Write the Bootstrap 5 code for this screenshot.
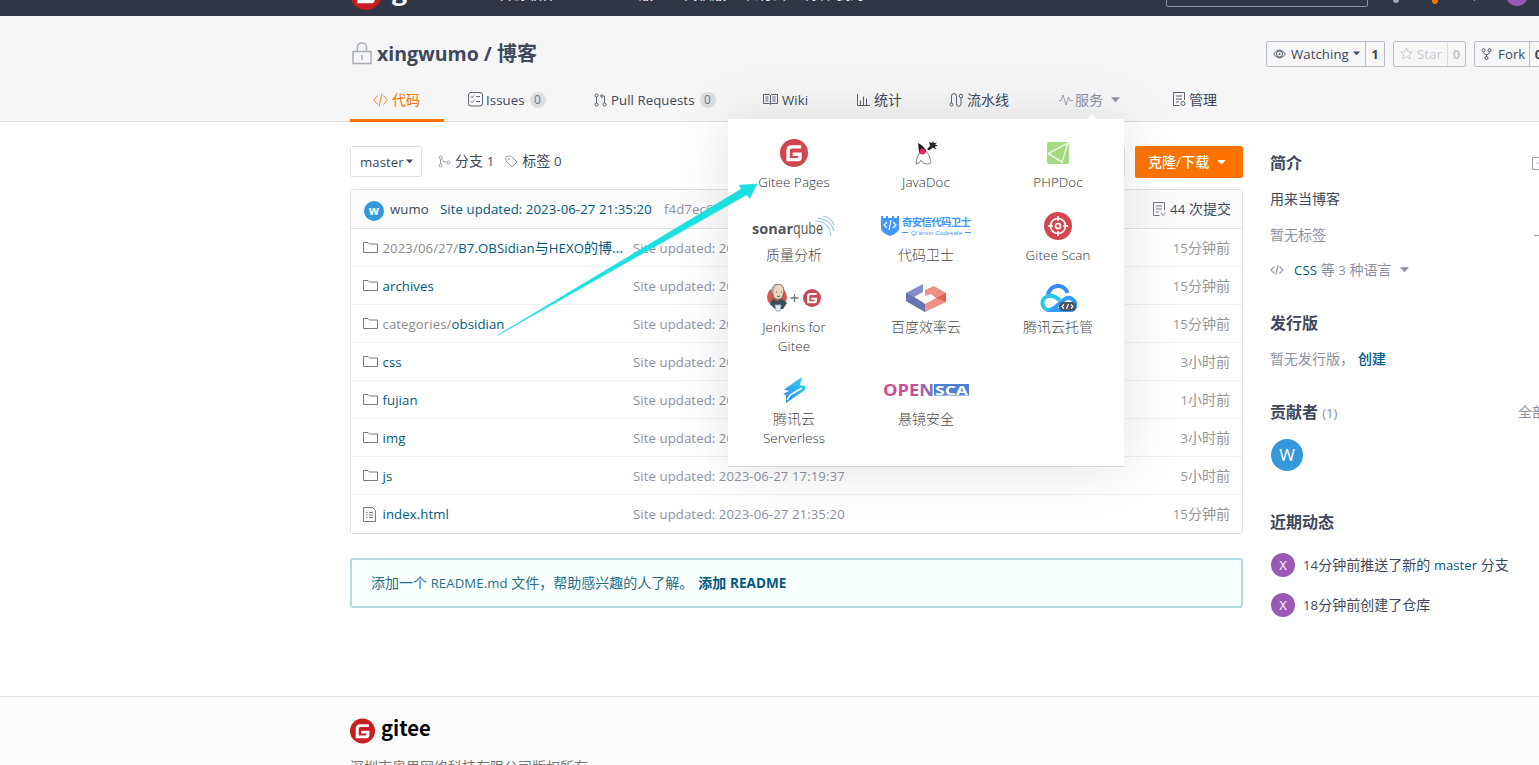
<!DOCTYPE html>
<html lang="zh-CN">
<head>
<meta charset="utf-8">
<title>xingwumo / 博客</title>
<link href="https://cdn.jsdelivr.net/npm/bootstrap@5.3.0/dist/css/bootstrap.min.css" rel="stylesheet">
<style>
body{font:14px/20px "Open Sans","Noto Sans CJK SC",sans-serif;color:#40485b;overflow:hidden;height:765px}
svg{flex:none;display:block}
.en{font-size:.943em;line-height:1;letter-spacing:.08px}
.d-flex>.en{line-height:20px}
.tabs .d-flex>.en{line-height:22px;padding-top:1px}
.wrap{width:1240px;margin-left:350px}
.ln{fill:none;stroke:currentColor;stroke-width:1;stroke-opacity:.85}
.mute{color:#8c92a4}.lnk{color:#005980}
.topbar{height:16px;background:#303643;color:#fff;overflow:hidden}
.topbar .wrap{height:42px;margin-top:-26px}
.topbar .menu span{flex:none;white-space:nowrap}
.srch{width:202px;height:34px;border:1px solid #8c92a4;border-radius:2px;margin-top:-1px}
.head{height:106px;background:#f6f6f6;border-bottom:1px solid #dcdddf}
.titlebar{height:62px;padding-top:13px}
.ttl{font-size:20px;font-weight:700;line-height:24px}
.ttl .en{font-size:19.500px;letter-spacing:0}
.sbtn{height:26px;border:1px solid #b9bcc9;border-radius:2px;margin-right:8px}
.sbtn b{border-left:1px solid #b9bcc9;height:24px;line-height:24px;text-align:center;font-size:13px}
.sbtn.off{color:#c6c6ca}.sbtn.off b{border-color:#dddde2}
.tabs{height:44px}
.tabs>div{flex:none;padding-left:23px;position:relative;white-space:nowrap;padding-top:2px}
.tabs>div:nth-child(1){width:94px;color:#fe7300;border-bottom:3px solid #fe7300}
.tabs>div:nth-child(2){width:127px;padding-left:24px}
.tabs>div:nth-child(3){width:169px}
.tabs>div:nth-child(4){width:93px}
.tabs>div:nth-child(5){width:93px}
.tabs>div:nth-child(6){width:109px}
.tabs>div:nth-child(7){width:114px;color:#8c92a4}
.tabs>div:not(:first-child){padding-bottom:3px}
.num{width:16px;height:16px;border-radius:8px;background:#dcdddf;color:#6b7691;font-size:12px;line-height:16px;text-align:center;margin-left:5px}
.drop{position:absolute;left:-307px;top:41px;width:396px;height:348px;background:#fff;box-shadow:0 0 50px rgba(60,64,75,.15);border-bottom:1px solid #d5d7da;z-index:5;padding-top:20px;display:grid;grid-template-columns:repeat(3,132px);align-content:start;row-gap:20.500px;color:#4a4a4a;white-space:normal}
.drop:before{content:"";position:absolute;left:359px;top:-5px;border:5px solid transparent;border-top:0;border-bottom-color:#fff}
.drop>div{text-align:center;line-height:19px}
.drop i{height:28px;margin-bottom:5px;display:flex;align-items:center;justify-content:center;font-style:normal}
.drop p{margin:0 auto;width:84px;font-weight:300}
.drop p .en{font-size:13.400px;color:#333}
.mainc{width:893px;padding-top:24px}
.side{width:292px;margin-left:27px;padding-top:23px;white-space:nowrap}
.side h2{font-size:16px;font-weight:600;height:36px;line-height:36px;margin:0}
.bx{border:1px solid #dce3e8;border-radius:2px;height:31px}
.dl{height:32px;width:108px;background:#fe7300;color:#fff;border-radius:2px;padding-left:13px}
.files{border:1px solid #dce3e8;border-radius:3px;margin-top:11px;height:345px}
.fr{height:38px;border-bottom:1px solid #edf1f5;padding:0 12px}
.fr.h1r{background:#fbfbfc;height:39px;border-color:#dce3e8}
.fr:last-child{border:0}
.fr .lnk{padding-left:.5px}
.fr>svg{color:#5c6375}
.ava{border-radius:50%;color:#fff;background:#3498db;text-align:center;flex:none}
.tip{margin-top:24px;height:50px;border:2px solid #b5d9e0;border-radius:3px;background:#f8ffff;color:#276f86;padding-left:19px}
.foot{margin-top:71px;border-top:1px solid #dce3e8;background:#fbfbfb;height:80px;padding-top:21px}
.brand{font:700 20.200px/24px "Noto Sans CJK SC","Noto Sans",sans-serif;color:#000}
.arrow{position:absolute;left:0;top:0;z-index:9;pointer-events:none}
</style>
<script src="https://cdn.jsdelivr.net/npm/bootstrap@5.3.0/dist/js/bootstrap.bundle.min.js"></script>
</head>
<body>
<svg width="0" height="0" class="position-absolute">
<symbol id="g" viewBox="0 0 28 28"><circle cx="14" cy="14" r="14"/><path d="M21.2 6.3v3.2h-9.300q-2.100 0-2.100 2.100v7.400h7.300q1.200 0 1.200-1.200v-.9h-5.600v-3.300h9v5.100q0 3.500-3.500 3.500H6.400V11.500q0-5.200 5.200-5.200z" fill="#fff"/></symbol>
<symbol id="dir" viewBox="0 0 15 13"><path class="ln" d="M.5 11.500V1.500h4.500l1.500 1.500h8v8.500z"/></symbol>
<symbol id="doc" viewBox="0 0 13 15"><path class="ln" d="M.5.5h9l3 3v11H.5zM3 5.500h1.500M3 8h1.500M3 10.500h1.500M6 5.500h4M6 8h4M6 10.500h4"/></symbol>
<symbol id="car" viewBox="0 0 10 6"><path d="M0 0h10L5 5.500z" fill="currentColor"/></symbol>
</svg>
<div class="topbar"><div class="wrap d-flex">
<svg width="32" height="32" style="margin-top:4px" fill="#c71d23"><use href="#g"/></svg>
<div class="menu d-flex" style="width:784px;padding-top:10px"><span class="brand text-white" style="font-size:27px;margin:-7px 0 0 9px;width:109px">gitee</span><span style="width:111px">开源软件</span><span style="width:73px">企业版</span><span style="width:60px">高校版</span><span style="width:60px">私有云</span><span style="width:32px">博客</span><span>我的</span></div>
<div class="srch"></div>
<svg width="170" height="42" fill="#a6aab8"><circle cx="28" cy="26" r="3"/><path d="M106 18h1v9h-1z"/><path d="M64 23h6v5l-2 2h-2l-2-2z" fill="#fe7300"/><circle cx="149" cy="21" r="11" fill="#9b59b6"/></svg>
</div></div>
<div class="head"><div class="wrap">
<div class="titlebar d-flex align-items-center">
<svg width="20" height="23" class="ln" style="color:#9ba1b0;stroke-width:1.500;margin-left:2px;margin-right:5px"><path d="M1 9.500h18v12H1zM5.500 9V5a4.500 4 0 0 1 9 0v4M10 13v5"/></svg>
<div class="ttl" style="width:889px"><span class="en">xingwumo / </span>博客</div>
<div class="sbtn d-flex align-items-center"><svg class="ln" width="13" height="12" style="margin:0 5px 0 6px"><path d="M.5 6Q6.500-2 12.500 6 6.500 14 .5 6z"/><circle cx="6.500" cy="6" r="3"/><circle cx="6.500" cy="6" r=".7"/></svg><span class="en" style="width:62px">Watching</span><svg width="7" height="5" style="margin-right:5px"><use href="#car"/></svg><b style="width:19px">1</b></div>
<div class="sbtn off d-flex align-items-center"><svg class="ln" width="13" height="13" style="margin:0 4px 0 6px"><path d="M6.500 1l1.700 3.700 4 .4-3 2.700.9 4-3.600-2.100-3.600 2.100.9-4-3-2.700 4-.4z"/></svg><span class="en" style="width:30px">Star</span><b style="width:18px">0</b></div>
<div class="sbtn d-flex align-items-center"><svg class="ln" width="11" height="12" style="margin:0 6px 0 6px"><circle cx="2.500" cy="2.200" r="1.500"/><circle cx="8.500" cy="2.200" r="1.500"/><circle cx="5.500" cy="10" r="1.500"/><path d="M2.500 4q0 2 3 3 3-1 3-3M5.500 6.500v2"/></svg><span class="en" style="width:31px">Fork</span><b style="width:18px">0</b></div>
</div>
<div class="tabs d-flex">
<div class="d-flex align-items-center"><svg class="ln" width="15" height="14" style="margin-right:4px"><path d="M4.500 2.500L.8 7l3.700 4.500M10.500 2.500L14.200 7l-3.700 4.500M8.800.5L6.200 13.500"/></svg>代码</div>
<div class="d-flex align-items-center"><svg class="ln" width="15" height="15" style="margin-right:3px"><rect x=".5" y=".5" width="14" height="13.500" rx="2.500"/><path d="M3 4.500l1 1 2-2M3 9.500l1 1 2-2M8 4.500h4M8 9.500h4"/></svg><span class="en">Issues</span><div class="num">0</div></div>
<div class="d-flex align-items-center"><svg class="ln" width="13" height="14" style="margin-right:4px"><circle cx="2.500" cy="2.500" r="1.500"/><circle cx="2.500" cy="11.500" r="1.500"/><circle cx="10.500" cy="11.500" r="1.500"/><path d="M2.500 4v6M10.500 10V3h-4M8.500.8L6.500 3l2 2.200"/></svg><span class="en">Pull Requests</span><div class="num">0</div></div>
<div class="d-flex align-items-center"><svg class="ln" width="15" height="13" style="margin-right:4px"><path d="M.5 1.500h6l1 1 1-1h6v9h-6l-1 1-1-1h-6zM7.500 2v9M2.500 4h3M2.500 6h3M2.500 8h3M9.500 4h3M9.500 6h3M9.500 8h3"/></svg><span class="en">Wiki</span></div>
<div class="d-flex align-items-center"><svg class="ln" width="15" height="14" style="margin-right:3px"><path d="M1.500 1v11.500H14M4.500 12V7.500M7.500 12V3.500M10.500 12V5.500"/></svg>统计</div>
<div class="d-flex align-items-center"><svg class="ln" width="15" height="14" style="margin-right:3px"><path d="M2.500 10V3a2 2 0 0 1 5 0v8a2 2 0 0 0 4.500 0V5"/><circle cx="2.500" cy="11.500" r="1.500"/><circle cx="12" cy="3" r="1.800"/></svg>流水线</div>
<div class="d-flex align-items-center"><svg class="ln" width="15" height="14" style="margin-right:2px"><path d="M1 7.500h2l2-5.500 3 10L10.500 4l1.500 3.500h3"/></svg>服务<svg width="9" height="6" style="margin-left:8px"><use href="#car"/></svg>
<div class="drop">
<div><i><svg width="28" height="28" fill="#d2474e"><use href="#g"/></svg></i><p><span class="en">Gitee Pages</span></p></div>
<div><i><svg width="26" height="28"><path d="M7 13Q3 19 3 25l3-1q2-5 4 0l4 1q4 0 4-2-1-8-6-12z" fill="#fff" stroke="#888"/><path d="M5 4q8 4 8 9-4 4-7 0z" fill="#222"/><circle cx="9.500" cy="12.500" r="2.900" fill="#e8246d"/><path d="M14 10l3-3-1-4 3 1 1-2 1 2 3-.5-2 2 3 1-3 1 1 3-3-2-4 3z" fill="#292929"/></svg></i><p><span class="en">JavaDoc</span></p></div>
<div><i><svg width="22" height="22"><rect width="22" height="22" rx="2" fill="#a5da83"/><path d="M21 1L1 11.500 15 20zM1 11.500L15 20 21 1" stroke="#e6f6db" stroke-width="1.500" fill="none"/></svg></i><p><span class="en">PHPDoc</span></p></div>
<div><i><svg width="86" height="28"><text x="1" y="22" font-family="Open Sans" font-size="14.500" font-weight="700" fill="#555" textLength="41" lengthAdjust="spacingAndGlyphs">sonar</text><text x="42" y="22" font-family="Open Sans" font-size="15.500" fill="#555" textLength="30" lengthAdjust="spacingAndGlyphs">qube</text><path d="M64 9q14 0 16 15M67 6q13 2 16 13M72 4q9 2 11 9" fill="none" stroke="#9ccbe3" stroke-width="1.200"/></svg></i><p>质量分析</p></div>
<div><i><svg width="90" height="22"><path d="M0 1h2v2h3V1h2v2h4V1h2v2h3V1h2v13q-1 4-9 7-8-3-9-7z" fill="#4097f5"/><path d="M6 7l-3 3 3 3M12 7l3 3-3 3M10 5l-2 10" stroke="#fff" fill="none" stroke-width="1.200"/><text x="21" y="11" font-family="Noto Sans CJK SC" font-size="10.500" font-weight="700" fill="#4097f5" textLength="69">奇安信代码卫士</text><text x="30" y="20" font-family="Liberation Sans" font-size="6" fill="#4097f5" textLength="51">Qi'anxin Codesafe</text><path d="M21 17.500h6M84 17.500h6" stroke="#4097f5"/></svg></i><p>代码卫士</p></div>
<div><i><svg width="28" height="28"><circle cx="14" cy="14" r="14" fill="#d2474e"/><g stroke="#fff" stroke-width="1.700" fill="none"><circle cx="14" cy="14" r="7.500"/><circle cx="14" cy="14" r="2.500"/><path d="M14 4v5M14 19v5M4 14h5M19 14h5"/></g></svg></i><p><span class="en">Gitee Scan</span></p></div>
<div><i><svg width="54" height="28"><circle cx="10" cy="13" r="10" fill="#d15853"/><path d="M5 8q0-8 6-8t6 8l-2 6q-4 3-8 0z" fill="#ead5bf" stroke="#76675e"/><path d="M5 9Q3 1 10 1q-4 3-3 9z" fill="#b5aaa0"/><path d="M6 15l4 2 5-2 5 4-4 6H8l-5-5z" fill="#394c5c"/><path d="M8 21h6l-1 6H9z" fill="#eee" stroke="#9ab"/><path d="M9 8h1M14 8h1M10 12q2 1 3 0" stroke="#554" fill="none"/><path d="M23.500 14h8M27.500 10v8" stroke="#777" stroke-width="1.300"/><svg x="36" y="5" width="18" height="18" fill="#c64855"><use href="#g"/></svg></svg></i><p><span class="en">Jenkins for Gitee</span></p></div>
<div><i><svg width="40" height="28"><path d="M17 0v8L8 13l11 7v8L0 17V9z" fill="#8390c8"/><path d="M0 9l8 4 11 7v8L0 17z" fill="#6873b2"/><path d="M19 12V6l9-4 12 7v9L19 28v-8l11-6-5-4z" fill="#ed9184"/><path d="M40 9v9l-10-4z" fill="#e0614f"/></svg></i><p>百度效率云</p></div>
<div><i><svg width="38" height="28" fill="none" stroke-width="4"><path d="M9 11a10 10 0 0 1 19.500-2" stroke="#348cff"/><path d="M21 16l-5-3q-4-2-8-.5a7 7 0 0 0 1.500 13.500q3 0 6-2" stroke="#27c5ec"/><path d="M13 26l13-11q5-3 9 2t-2 9z" stroke="#329dff"/><rect x="20" y="18" width="17" height="9" rx="4" fill="#4a5563" stroke="none"/><path d="M25 20.500l-2 2 2 2M32 20.500l2 2-2 2M29.500 20l-2 5" stroke="#fff" stroke-width="1.200"/></svg></i><p>腾讯云托管</p></div>
<div><i><svg width="24" height="28"><defs><linearGradient id="bl" x1="0" y1="1" x2="1" y2="0"><stop stop-color="#2982ff"/><stop offset="1" stop-color="#36d8e8"/></linearGradient></defs><path d="M20 1L2 13.500l5 1.500-6 3 3 1v8l19-13v-4l-5-1z" fill="url(#bl)"/><path d="M5 24l3-5 12-7" stroke="#fff" fill="none" stroke-width="1.500"/></svg></i><p>腾讯云 <span class="en">Serverless</span></p></div>
<div><i><svg width="86" height="14"><defs><linearGradient id="os"><stop stop-color="#e0488e"/><stop offset=".6" stop-color="#c55099"/><stop offset="1" stop-color="#7c75bd"/></linearGradient></defs><rect x="51" y="1" width="35" height="11.500" fill="#4d7fd3"/><text x="0" y="12.800" font-family="Open Sans" font-size="16" font-weight="700" fill="url(#os)" textLength="51" lengthAdjust="spacingAndGlyphs">OPEN</text><text x="52" y="11.500" font-family="Open Sans" font-size="13" font-weight="700" fill="#fff" textLength="33" lengthAdjust="spacingAndGlyphs">SCA</text></svg></i><p>悬镜安全</p></div>
</div></div>
<div class="d-flex align-items-center"><svg class="ln" width="14" height="15" style="margin-right:3px"><path d="M12.500 8V.5h-11v13h6M4 4h6M4 7h6M4 10h3"/><circle cx="11" cy="11.500" r="2"/></svg>管理</div>
</div></div></div>
<div class="wrap d-flex">
<div class="mainc">
<div class="d-flex align-items-center" style="height:32px">
<div class="bx d-flex align-items-center" style="width:72px;padding-left:9px;margin-top:-1px"><span class="en" style="width:46px">master</span><svg width="7" height="5"><use href="#car"/></svg></div>
<div class="d-flex align-items-center" style="margin-top:-2px"><svg class="ln mute" width="13" height="13" style="margin:0 4px 0 16px"><circle cx="2.500" cy="2.500" r="1.500"/><circle cx="2.500" cy="10.500" r="1.500"/><circle cx="10.500" cy="7.500" r="1.500"/><path d="M2.500 4v5M4 3.500q1 4 5 4"/></svg>分支&nbsp;<span class="en">1</span>
<svg class="ln mute" width="13" height="13" style="margin:0 4px 0 11px"><path d="M1 1.500L6 1l6 6-5 5-6-6z"/><circle cx="4" cy="4" r=".6"/></svg>标签&nbsp;<span class="en">0</span></div>
<div class="bx ms-auto" style="width:60px;margin-right:10px"></div>
<div class="dl d-flex align-items-center"><b style="font-weight:500;width:69px;white-space:nowrap">克隆/下载</b><svg width="9" height="5"><use href="#car"/></svg></div>
</div>
<div class="files">
<div class="fr h1r d-flex align-items-center"><div class="ava" style="width:20px;height:20px;font:700 12px/20px Open Sans;margin:3px 6px 0 1px">w</div><span class="en" style="width:50px">wumo</span><span class="en lnk" style="width:224px;padding:0">Site updated: 2023-06-27 21:35:20</span><span class="en mute">f4d7ec6</span><svg class="ln mute ms-auto" width="13" height="15" style="margin-right:4px"><path d="M11.500 8V.5H.5v13h6M3 4h6M3 7h6M3 10h3M8 11l2 2.500 3-3"/></svg><span style="margin-right:-1px"><span class="en">44</span> 次提交</span></div>
<div class="fr d-flex align-items-center"><svg class="me-1" width="15" height="13"><use href="#dir"/></svg><span class="lnk" style="width:251px"><span class="en" style="color:#8c8c8c">2023/06/27/</span><span class="en">B7.OBSidian</span>与<span class="en">HEXO</span>的博...</span><span class="mute en">Site updated: 2023-06-27 21:35:20</span><span class="ms-auto" style="color:#959595"><span class="en">15</span>分钟前</span></div>
<div class="fr d-flex align-items-center"><svg class="me-1" width="15" height="13"><use href="#dir"/></svg><span class="lnk" style="width:251px"><span class="en">archives</span></span><span class="mute en">Site updated: 2023-06-27 21:35:20</span><span class="ms-auto" style="color:#959595"><span class="en">15</span>分钟前</span></div>
<div class="fr d-flex align-items-center"><svg class="me-1" width="15" height="13"><use href="#dir"/></svg><span class="lnk" style="width:251px"><span class="en"><span style="color:#8c8c8c">categories/</span>obsidian</span></span><span class="mute en">Site updated: 2023-06-27 21:35:20</span><span class="ms-auto" style="color:#959595"><span class="en">15</span>分钟前</span></div>
<div class="fr d-flex align-items-center"><svg class="me-1" width="15" height="13"><use href="#dir"/></svg><span class="lnk" style="width:251px"><span class="en">css</span></span><span class="mute en">Site updated: 2023-06-27 18:10:22</span><span class="ms-auto" style="color:#959595"><span class="en">3</span>小时前</span></div>
<div class="fr d-flex align-items-center"><svg class="me-1" width="15" height="13"><use href="#dir"/></svg><span class="lnk" style="width:251px"><span class="en">fujian</span></span><span class="mute en">Site updated: 2023-06-27 20:21:47</span><span class="ms-auto" style="color:#959595"><span class="en">1</span>小时前</span></div>
<div class="fr d-flex align-items-center"><svg class="me-1" width="15" height="13"><use href="#dir"/></svg><span class="lnk" style="width:251px"><span class="en">img</span></span><span class="mute en">Site updated: 2023-06-27 18:10:22</span><span class="ms-auto" style="color:#959595"><span class="en">3</span>小时前</span></div>
<div class="fr d-flex align-items-center"><svg class="me-1" width="15" height="13"><use href="#dir"/></svg><span class="lnk" style="width:251px"><span class="en">js</span></span><span class="mute en">Site updated: 2023-06-27 17:19:37</span><span class="ms-auto" style="color:#959595"><span class="en">5</span>小时前</span></div>
<div class="fr d-flex align-items-center"><svg width="13" height="15" style="margin-right:6px"><use href="#doc"/></svg><span class="lnk" style="width:251px"><span class="en">index.html</span></span><span class="mute en">Site updated: 2023-06-27 21:35:20</span><span class="ms-auto" style="color:#959595"><span class="en">15</span>分钟前</span></div>
</div>
<div class="tip d-flex align-items-center"><span>添加一个 <span class="en">README.md</span> 文件，帮助感兴趣的人了解。</span><b class="lnk" style="margin-left:5px">添加 <span class="en" style="font-size:13.500px">README</span></b></div>
</div>
<div class="side">
<div class="d-flex align-items-center"><h2 style="width:262px">简介</h2><svg class="ln mute" width="13" height="13"><path d="M8 .5H.5v12h12V7M5 7l7-6"/></svg></div>
<div class="d-flex align-items-center" style="height:36px">用来当博客</div>
<div class="d-flex align-items-center mute" style="height:36px"><span style="width:264px">暂无标签</span><svg class="ln" width="11" height="11"><path d="M0 5.500h11M5.500 0v11"/></svg></div>
<div class="d-flex align-items-center mute" style="height:34px"><svg class="ln" width="14" height="12" style="margin-right:10px;stroke-width:1.300"><path d="M4.500 2.500L1 6l3.500 3.500M9.500 2.500L13 6 9.500 9.500M8 1.500L6 10.500"/></svg><span style="width:106px"><span class="lnk en">CSS</span> 等 <span class="en">3</span> 种语言</span><svg width="9" height="6"><use href="#car"/></svg></div>
<h2 style="margin-top:18px">发行版</h2>
<div class="d-flex align-items-center mute" style="height:36px"><span style="width:88px">暂无发行版，</span><span class="lnk" style="font-weight:500">创建</span></div>
<div class="d-flex align-items-center" style="margin-top:17px"><h2 style="width:248px">贡献者 <span class="mute fw-normal" style="font-size:13px">(1)</span></h2><span class="mute">全部</span></div>
<div class="ava" style="width:32px;height:32px;line-height:32px;margin:9px 0 0 1px;font-size:17px">W</div>
<h2 style="margin-top:33px">近期动态</h2>
<div class="d-flex align-items-center" style="height:40px;margin:5px 0 0 1px"><div class="ava" style="width:24px;height:24px;line-height:24px;background:#9b59b6;margin-right:8px;font-size:13px">X</div><span><span class="en">14</span>分钟前推送了新的 <span class="lnk en" style="font-size:13px">master</span> 分支</span></div>
<div class="d-flex align-items-center" style="height:40px;margin-left:1px"><div class="ava" style="width:24px;height:24px;line-height:24px;background:#9b59b6;margin-right:8px;font-size:13px">X</div><span><span class="en">18</span>分钟前创建了仓库</span></div>
</div>
</div>
<div class="foot"><div class="wrap">
<div class="d-flex"><svg width="25" height="26" fill="#c71d23"><use href="#g"/></svg><span class="brand" style="margin:-2px 0 0 6px">gitee</span></div>
<div style="color:#777;margin-top:13px">深圳市奥思网络科技有限公司版权所有</div>
</div></div>
<svg class="arrow" width="800" height="360"><path d="M498 335l243.500-146-2.500-3.700 18-1.300-7.300 14.300-2.700-3.800z" fill="#1be0df" stroke="#1be0df" stroke-width=".7"/></svg>
</body>
</html>
